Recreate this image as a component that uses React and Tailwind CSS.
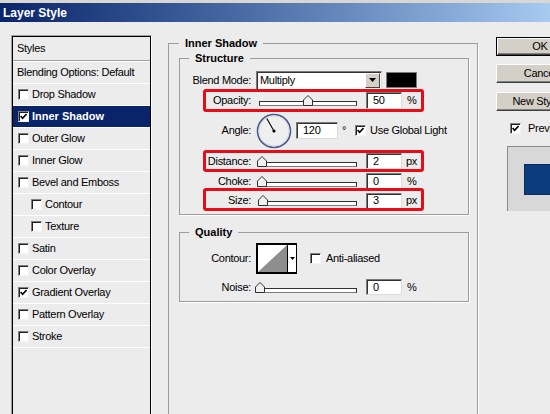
import React from 'react'

const STYLE_ROWS = [
  { label: 'Drop Shadow' },
  { label: 'Inner Shadow', checked: true, active: true },
  { label: 'Outer Glow' },
  { label: 'Inner Glow' },
  { label: 'Bevel and Emboss' },
  { label: 'Contour', indent: true },
  { label: 'Texture', indent: true },
  { label: 'Satin' },
  { label: 'Color Overlay' },
  { label: 'Gradient Overlay', checked: true },
  { label: 'Pattern Overlay' },
  { label: 'Stroke' },
]

function CheckBox({ checked }) {
  return (
    <span className="flex items-center justify-center w-[11px] h-[11px] shrink-0 bg-white border border-t-[#808080] border-l-[#808080] border-r-[#f4f4f4] border-b-[#f4f4f4] shadow-[inset_1px_1px_0_#202020]">
      {checked && (
        <svg width="7" height="7" viewBox="0 0 7 7">
          <path d="M0.6 3 L2.6 5.2 L6.5 1" stroke="#000" strokeWidth="1.6" fill="none" />
        </svg>
      )}
    </span>
  )
}

function Slider({ className, thumbClass }) {
  return (
    <div className={`relative shrink-0 h-[11px] ${className}`}>
      <div className="absolute left-0 right-0 bottom-0 h-[5px] bg-white border border-[#303030] border-b-[#7a7a7a]" />
      <svg className={`absolute top-0 ${thumbClass}`} width="10" height="11" viewBox="0 0 10 11">
        <path d="M0.5 5 L5 0.5 L9.5 5 V10.5 H0.5 Z" fill="#f0f0f0" stroke="#303030" />
      </svg>
    </div>
  )
}

function Field({ value, className = 'w-[36px] h-[17px]' }) {
  return (
    <div className={`${className} shrink-0 flex items-center bg-white border border-t-[#7a7a7a] border-l-[#7a7a7a] border-r-[#dcdcdc] border-b-[#dcdcdc] shadow-[inset_1px_1px_0_#333] pl-[6px]`}>
      {value}
    </div>
  )
}

function Row({ label, className, children, mark }) {
  return (
    <div className={`relative flex items-center ${className}`}>
      <div className="w-[71px] shrink-0 text-right">{label}</div>
      {children}
      {mark && <div className={`absolute left-[23px] w-[221px] border-[3px] border-[#e60d17] rounded-[3px] pointer-events-none ${mark}`} />}
    </div>
  )
}

function Dial() {
  return (
    <svg className="ml-[5px] shrink-0" width="36" height="36" viewBox="0 0 36 36">
      <circle cx="18" cy="18" r="16.5" fill="#efefef" stroke="#4c5a88" strokeWidth="1.6" />
      <circle cx="18" cy="18" r="15" fill="none" stroke="#d8dbe6" strokeWidth="1" />
      <line x1="18" y1="18" x2="10.8" y2="5.5" stroke="#000" strokeWidth="1.1" />
      <circle cx="18" cy="18" r="1.6" fill="#000" />
    </svg>
  )
}

function Button({ children, isDefault, className = '' }) {
  return (
    <div className={`${className} w-[88px] h-[19px] ${isDefault ? 'border border-black' : ''}`}>
      <div className="h-full w-full bg-[#d4d0c8] border border-t-white border-l-white border-r-[#404040] border-b-[#404040] shadow-[inset_-1px_-1px_0_#808080] flex items-center justify-center">
        {children}
      </div>
    </div>
  )
}

export default function App() {
  return (
    <div className="w-[550px] h-[414px] overflow-hidden bg-[#ececec] border-t-[3px] border-t-[#d8d7d4] font-['Liberation_Sans',Arial,sans-serif] text-[11px] tracking-[-0.3px] text-black">
      <div className="h-[19px] bg-linear-to-r from-[#0a246a] to-[#a6caf0] flex items-center pl-[3px] text-white font-bold text-[12px] tracking-normal">
        Layer Style
      </div>

      <div className="flex items-start">
        {/* styles list */}
        <div className="mt-[13px] ml-[11px] w-[141px] h-[400px] shrink-0 border border-t-[#a0a0a0] border-l-[#a0a0a0] border-r-white border-b-white">
          <div className="h-full border border-black">
            <div className="h-[24px] border-b border-[#a0a0a0] pl-[4px] flex items-center">Styles</div>
            <div className="h-[23px] border-t border-b border-white pl-[4px] flex items-center">Blending Options: Default</div>
            {STYLE_ROWS.map(r => (
              <div
                key={r.label}
                className={`flex items-center gap-[3px] h-[22px] border-b border-white ${r.indent ? 'pl-[18px]' : 'pl-[5px]'} ${r.active ? 'bg-[#0a246a] text-white font-bold tracking-normal' : ''}`}
              >
                <CheckBox checked={r.checked} />
                <span>{r.label}</span>
              </div>
            ))}
          </div>
        </div>

        {/* settings */}
        <fieldset className="mt-[14px] ml-[16px] w-[310px] h-[420px] shrink-0 border border-[#9c9c9c] shadow-[1px_1px_0_#fff]">
          <legend className="ml-[10px] px-[6px] font-bold leading-[14px] tracking-normal">Inner Shadow</legend>

          <fieldset className="mt-[1px] ml-[10px] w-[290px] border border-[#9c9c9c] shadow-[1px_1px_0_#fff] pt-[5px] pb-[3px]">
            <legend className="ml-[9px] px-[6px] font-bold leading-[14px] tracking-normal">Structure</legend>

            <Row label="Blend Mode:" className="h-[20px]">
              <div className="ml-[5px] w-[126px] h-[19px] shrink-0 flex items-center bg-white border border-t-[#7a7a7a] border-l-[#7a7a7a] border-r-[#dcdcdc] border-b-[#dcdcdc] shadow-[inset_1px_1px_0_#333]">
                <span className="flex-1 pl-[3px]">Multiply</span>
                <div className="w-[15px] h-[15px] mr-[1px] bg-[#d4d0c8] border border-t-white border-l-white border-r-[#404040] border-b-[#404040] flex items-center justify-center">
                  <svg width="7" height="4" viewBox="0 0 7 4"><path d="M0 0 H7 L3.5 4 Z" fill="#000" /></svg>
                </div>
              </div>
              <div className="ml-[4px] w-[31px] h-[16px] shrink-0 bg-black border border-[#7a7a7a]" />
            </Row>

            <Row label="Opacity:" className="h-[21px]" mark="top-[-1px] h-[23px]">
              <Slider className="ml-[8px] w-[98px]" thumbClass="left-[44px]" />
              <Field value="50" className="ml-[9px] w-[36px] h-[17px]" />
              <span className="ml-[5px]">%</span>
            </Row>

            <Row label="Angle:" className="h-[39px]">
              <Dial />
              <Field value="120" className="ml-[4px] w-[42px] h-[17px]" />
              <span className="ml-[4px] self-start mt-[11px]">°</span>
              <span className="ml-[9px]"><CheckBox checked /></span>
              <span className="ml-[4px]">Use Global Light</span>
            </Row>

            <Row label="Distance:" className="h-[22px]" mark="top-0 h-[22px]">
              <Slider className="ml-[8px] w-[98px]" thumbClass="-left-[2px]" />
              <Field value="2" className="ml-[9px] w-[36px] h-[16px]" />
              <span className="ml-[4px]">px</span>
            </Row>

            <Row label="Choke:" className="h-[18px]">
              <Slider className="ml-[8px] w-[98px]" thumbClass="-left-[2px]" />
              <Field value="0" className="ml-[9px] w-[36px] h-[16px]" />
              <span className="ml-[5px]">%</span>
            </Row>

            <Row label="Size:" className="h-[21px]" mark="top-[-2px] h-[23px]">
              <Slider className="ml-[8px] w-[98px]" thumbClass="-left-[1px]" />
              <Field value="3" className="ml-[9px] w-[36px] h-[16px]" />
              <span className="ml-[4px]">px</span>
            </Row>
          </fieldset>

          <fieldset className="mt-[10px] ml-[10px] w-[290px] border border-[#9c9c9c] shadow-[1px_1px_0_#fff] pt-[4px] pb-[5px]">
            <legend className="ml-[9px] px-[6px] font-bold leading-[14px] tracking-normal">Quality</legend>

            <Row label="Contour:" className="h-[31px]">
              <div className="ml-[5px] w-[41px] h-[31px] shrink-0 flex bg-white border-2 border-black border-r">
                <svg width="29" height="27" viewBox="0 0 29 27" className="shrink-0">
                  <path d="M0 27 L29 0 V27 Z" fill="#8e8e8e" />
                </svg>
                <div className="flex-1 border-l border-black flex items-center justify-center">
                  <svg width="5" height="3" viewBox="0 0 5 3"><path d="M0 0 H5 L2.5 3 Z" fill="#000" /></svg>
                </div>
              </div>
              <span className="ml-[13px]"><CheckBox /></span>
              <span className="ml-[5px]">Anti-aliased</span>
            </Row>

            <Row label="Noise:" className="h-[18px] mt-[4px]">
              <Slider className="ml-[6px] w-[100px]" thumbClass="-left-[2px]" />
              <Field value="0" className="ml-[9px] w-[36px] h-[16px]" />
              <span className="ml-[5px]">%</span>
            </Row>
          </fieldset>
        </fieldset>

        {/* buttons */}
        <div className="mt-[15px] ml-[18px] w-[92px] shrink-0">
          <Button isDefault>OK</Button>
          <Button className="mt-[8px]">Cancel</Button>
          <Button className="mt-[9px]">New Style...</Button>
          <div className="mt-[9px] ml-[14px] flex items-center gap-[7px]">
            <CheckBox checked />
            <span>Preview</span>
          </div>
          <div className="mt-[9px] ml-[11px] w-[80px] h-[65px] bg-[#d8d8d8] border-t border-l border-[#8a8a8a] pt-[17px] pl-[16px]">
            <div className="w-[31px] h-[31px] bg-[#0c3c7c] border border-[#082c5e]" />
          </div>
        </div>
      </div>
    </div>
  )
}
